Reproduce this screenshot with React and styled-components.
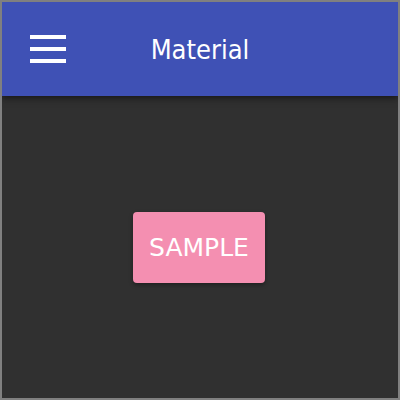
import styled, { createGlobalStyle } from "styled-components";

const GlobalStyle = createGlobalStyle`
  html, body {
    margin: 0;
    padding: 0;
    background: #808080;
  }
  * {
    box-sizing: border-box;
  }
`;

const Frame = styled.div`
  width: 400px;
  height: 400px;
  border: 2px solid #808080;
  background: #303030;
  display: flex;
  flex-direction: column;
  font-family: "DejaVu Sans Condensed", "DejaVu Sans", sans-serif;
  overflow: hidden;
`;

const AppBar = styled.header`
  position: relative;
  z-index: 1;
  height: 94px;
  background: #3f51b5;
  display: flex;
  align-items: center;
  padding-left: 28px;
  box-shadow: 0 2px 4px rgba(0, 0, 0, 0.3), 0 4px 8px rgba(0, 0, 0, 0.2);
`;

const MenuButton = styled.div`
  display: flex;
  flex-direction: column;
  gap: 8px;
  width: 36px;
`;

const MenuLine = styled.span`
  display: block;
  height: 4px;
  background: #ffffff;
`;

const Title = styled.h1`
  flex: 1;
  margin: 0;
  padding-right: 64px;
  text-align: center;
  color: #ffffff;
  font-size: 27px;
  font-weight: normal;
`;

const Content = styled.main`
  flex: 1;
  display: flex;
  align-items: center;
  justify-content: center;
  padding-right: 2px;
`;

const SampleButton = styled.button`
  width: 132px;
  height: 71px;
  padding: 0;
  border: none;
  border-radius: 4px;
  background: #f48fb1;
  color: #ffffff;
  font-family: "DejaVu Sans", sans-serif;
  font-size: 25px;
  box-shadow: 0 2px 4px rgba(0, 0, 0, 0.35);
`;

const App = () => {
  return (
    <>
      <GlobalStyle />
      <Frame>
        <AppBar>
          <MenuButton>
            <MenuLine />
            <MenuLine />
            <MenuLine />
          </MenuButton>
          <Title>Material</Title>
        </AppBar>
        <Content>
          <SampleButton>SAMPLE</SampleButton>
        </Content>
      </Frame>
    </>
  );
};

export default App;
